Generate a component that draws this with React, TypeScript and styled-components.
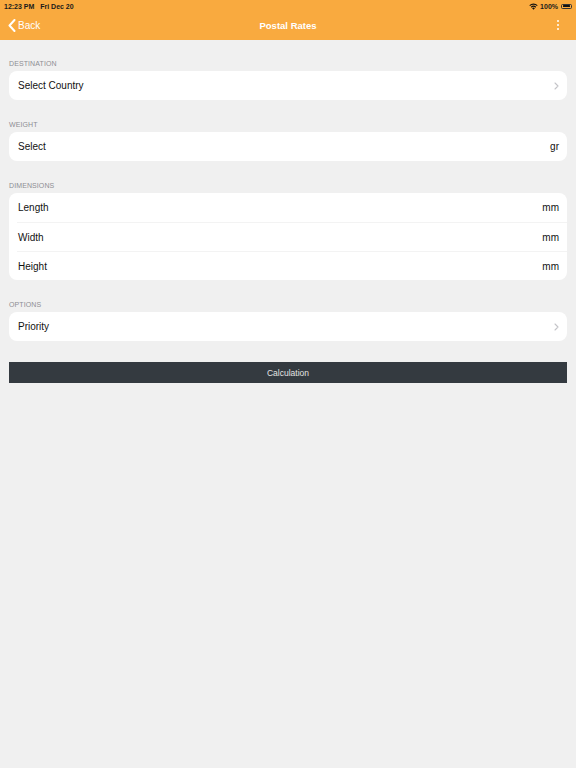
import React from "react";
import styled, { createGlobalStyle } from "styled-components";

const GlobalStyle = createGlobalStyle`
  html, body {
    margin: 0;
    padding: 0;
    background: #f0f0f0;
    font-family: "Liberation Sans", Arial, sans-serif;
    -webkit-font-smoothing: antialiased;
  }
`;

type Row = { label: string; unit?: string; chevron?: boolean };
type Section = { title: string; rows: Row[] };

const sections: Section[] = [
  { title: "DESTINATION", rows: [{ label: "Select Country", chevron: true }] },
  { title: "WEIGHT", rows: [{ label: "Select", unit: "gr" }] },
  {
    title: "DIMENSIONS",
    rows: [
      { label: "Length", unit: "mm" },
      { label: "Width", unit: "mm" },
      { label: "Height", unit: "mm" },
    ],
  },
  { title: "OPTIONS", rows: [{ label: "Priority", chevron: true }] },
];

const Chevron = () => (
  <svg width="5" height="8" viewBox="0 0 5 8">
    <path d="M1 1 L4 4 L1 7" fill="none" stroke="#c4c4c8" strokeWidth="1.1" strokeLinecap="round" strokeLinejoin="round" />
  </svg>
);

const App: React.FC = () => {
  return (
    <>
      <GlobalStyle />
      <StyledHeader>
        <StyledStatusBar>
          <StyledStatusText>12:23 PM&nbsp;&nbsp;&nbsp;Fri Dec 20</StyledStatusText>
          <StyledStatusRight>
            <svg width="9" height="7" viewBox="0 0 18 14">
              <path d="M9 13.5 L6.2 10.4 A4 4 0 0 1 11.8 10.4 Z" fill="#111" />
              <path d="M3.6 7.6 A7.8 7.8 0 0 1 14.4 7.6 L12.8 9.3 A5.5 5.5 0 0 0 5.2 9.3 Z" fill="#111" />
              <path d="M0.6 4.4 A12 12 0 0 1 17.4 4.4 L15.8 6.2 A9.6 9.6 0 0 0 2.2 6.2 Z" fill="#111" />
            </svg>
            <StyledStatusText>100%</StyledStatusText>
            <StyledBattery>
              <StyledBatteryFill />
            </StyledBattery>
          </StyledStatusRight>
        </StyledStatusBar>
        <StyledNav>
          <StyledBack>
            <svg width="8" height="13" viewBox="0 0 8 13">
              <path d="M6.5 1 L1.5 6.5 L6.5 12" fill="none" stroke="#fff" strokeWidth="2" strokeLinecap="round" strokeLinejoin="round" />
            </svg>
            Back
          </StyledBack>
          <StyledTitle>Postal Rates</StyledTitle>
          <StyledMenu>
            <span />
            <span />
            <span />
          </StyledMenu>
        </StyledNav>
      </StyledHeader>

      <StyledContent>
        {sections.map((section) => (
          <StyledSection key={section.title}>
            <StyledSectionTitle>{section.title}</StyledSectionTitle>
            <StyledCard>
              {section.rows.map((row) => (
                <StyledRow key={row.label}>
                  <StyledRowLabel>{row.label}</StyledRowLabel>
                  {row.unit && <StyledUnit>{row.unit}</StyledUnit>}
                  {row.chevron && <Chevron />}
                </StyledRow>
              ))}
            </StyledCard>
          </StyledSection>
        ))}
        <StyledButton>Calculation</StyledButton>
      </StyledContent>
    </>
  );
};

export default App;

const StyledHeader = styled.header`
  background: #f9aa3f;
  height: 40px;
  display: flex;
  flex-direction: column;
`;

const StyledStatusBar = styled.div`
  height: 12px;
  display: flex;
  align-items: center;
  justify-content: space-between;
  padding: 0 4px;
`;

const StyledStatusText = styled.span`
  font-size: 7px;
  font-weight: bold;
  color: #1a1a1a;
`;

const StyledStatusRight = styled.div`
  display: flex;
  align-items: center;
  gap: 2px;
`;

const StyledBattery = styled.div`
  width: 11px;
  height: 5px;
  border: 0.7px solid #333;
  border-radius: 1.5px;
  padding: 0.6px;
  box-sizing: border-box;
  display: flex;
  margin-left: 1px;
`;

const StyledBatteryFill = styled.div`
  flex: 1;
  background: #111;
  border-radius: 0.5px;
`;

const StyledNav = styled.nav`
  flex: 1;
  display: flex;
  align-items: center;
  justify-content: space-between;
  padding: 0 17px 2px 8px;
  position: relative;
`;

const StyledBack = styled.div`
  display: flex;
  align-items: center;
  gap: 2px;
  color: #fff;
  font-size: 10px;
`;

const StyledTitle = styled.h1`
  position: absolute;
  left: 0;
  right: 0;
  margin: 0;
  text-align: center;
  color: #fff;
  font-size: 9.5px;
  font-weight: bold;
  pointer-events: none;
`;

const StyledMenu = styled.div`
  display: flex;
  flex-direction: column;
  gap: 1.6px;

  span {
    width: 2.4px;
    height: 2.4px;
    border-radius: 50%;
    background: #fff;
  }
`;

const StyledContent = styled.main`
  padding: 19px 9px 0;
  display: flex;
  flex-direction: column;
`;

const StyledSection = styled.section`
  margin-bottom: 20px;
`;

const StyledSectionTitle = styled.h2`
  margin: 0 0 3px;
  font-size: 7px;
  line-height: 9px;
  font-weight: normal;
  color: #8e8e93;
  letter-spacing: 0.1px;
`;

const StyledCard = styled.div`
  background: #fff;
  border-radius: 8px;
  overflow: hidden;
`;

const StyledRow = styled.div`
  box-sizing: border-box;
  height: 29px;
  display: flex;
  align-items: center;
  justify-content: space-between;
  padding: 0 8px 0 9px;

  & + & {
    border-top: 1px solid #f3f3f3;
    margin-left: 8px;
    padding-left: 1px;
  }
`;

const StyledRowLabel = styled.span`
  font-size: 10px;
  color: #111;
`;

const StyledUnit = styled.span`
  font-size: 10px;
  color: #111;
`;

const StyledButton = styled.button`
  margin-top: 1px;
  height: 21px;
  border: none;
  background: #343a40;
  color: #e4e4e4;
  font-family: inherit;
  font-size: 8.5px;
  padding: 0;
`;
